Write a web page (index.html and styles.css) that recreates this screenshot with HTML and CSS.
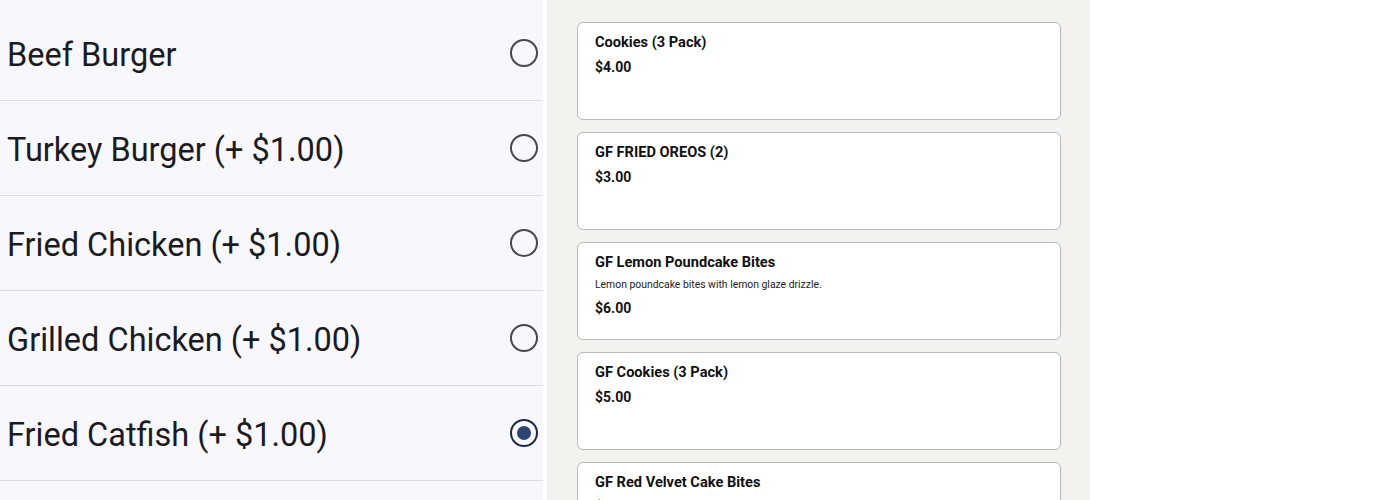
FILE: index.html
```html
<!DOCTYPE html>
<html>
<head>
    <title>Menu Options</title>
    <link rel="stylesheet" href="styles.css">
</head>
<body>
    <div class="page">
        <div class="options">
            <label class="option">
                <span class="option-name">Beef Burger</span>
                <span class="radio"></span>
            </label>
            <label class="option">
                <span class="option-name">Turkey Burger (+ $1.00)</span>
                <span class="radio"></span>
            </label>
            <label class="option">
                <span class="option-name">Fried Chicken (+ $1.00)</span>
                <span class="radio"></span>
            </label>
            <label class="option">
                <span class="option-name">Grilled Chicken (+ $1.00)</span>
                <span class="radio"></span>
            </label>
            <label class="option">
                <span class="option-name">Fried Catfish (+ $1.00)</span>
                <span class="radio checked"></span>
            </label>
        </div>

        <div class="menu">
            <div class="card">
                <div class="card-title">Cookies (3 Pack)</div>
                <div class="card-price">$4.00</div>
            </div>
            <div class="card">
                <div class="card-title">GF FRIED OREOS (2)</div>
                <div class="card-price">$3.00</div>
            </div>
            <div class="card">
                <div class="card-title">GF Lemon Poundcake Bites</div>
                <div class="card-desc">Lemon poundcake bites with lemon glaze drizzle.</div>
                <div class="card-price">$6.00</div>
            </div>
            <div class="card">
                <div class="card-title">GF Cookies (3 Pack)</div>
                <div class="card-price">$5.00</div>
            </div>
            <div class="card">
                <div class="card-title">GF Red Velvet Cake Bites</div>
                <div class="card-price">$6.00</div>
            </div>
        </div>
    </div>
</body>
</html>
```

FILE: styles.css
```css
body {
    margin: 0;
    background: #ffffff;
    font-family: Roboto, "Liberation Sans", Arial, sans-serif;
    color: #1b1b1f;
    height: 500px;
    overflow: hidden;
}
.page {
    display: flex;
    gap: 4px;
    height: 500px;
}
.options {
    width: 543px;
    background-color: #f7f7fc;
    padding-top: 6px;
}
.option {
    display: flex;
    align-items: center;
    justify-content: space-between;
    height: 94px;
    padding: 0 5px 0 7px;
    border-bottom: 1px solid #dcdce2;
}
.option-name {
    font-size: 32.5px;
    color: #1b1b1f;
    padding-top: 4px;
}
.radio {
    width: 24px;
    height: 24px;
    border: 2.5px solid #47474d;
    border-radius: 50%;
    display: flex;
    align-items: center;
    justify-content: center;
}
.radio.checked {
    border-color: #1e2a45;
}
.radio.checked::after {
    content: "";
    width: 14px;
    height: 14px;
    border-radius: 50%;
    background-color: #2e4573;
}
.menu {
    width: 543px;
    background-color: #f3f2ef;
    padding: 22px 0 0 30px;
    box-sizing: border-box;
    display: flex;
    flex-direction: column;
    gap: 12px;
}
.card {
    width: 484px;
    min-height: 98px;
    box-sizing: border-box;
    background: #ffffff;
    border: 1px solid #b9b9b9;
    border-radius: 6px;
    padding: 10px 17px;
    flex-shrink: 0;
}
.card-title {
    font-size: 14.6px;
    font-weight: 700;
    line-height: 18px;
    color: #111111;
}
.card-desc {
    font-size: 10.4px;
    line-height: 14px;
    margin-top: 7px;
    color: #222222;
}
.card-price {
    font-size: 14px;
    font-weight: 700;
    line-height: 18px;
    margin-top: 7px;
    color: #111111;
}
```
